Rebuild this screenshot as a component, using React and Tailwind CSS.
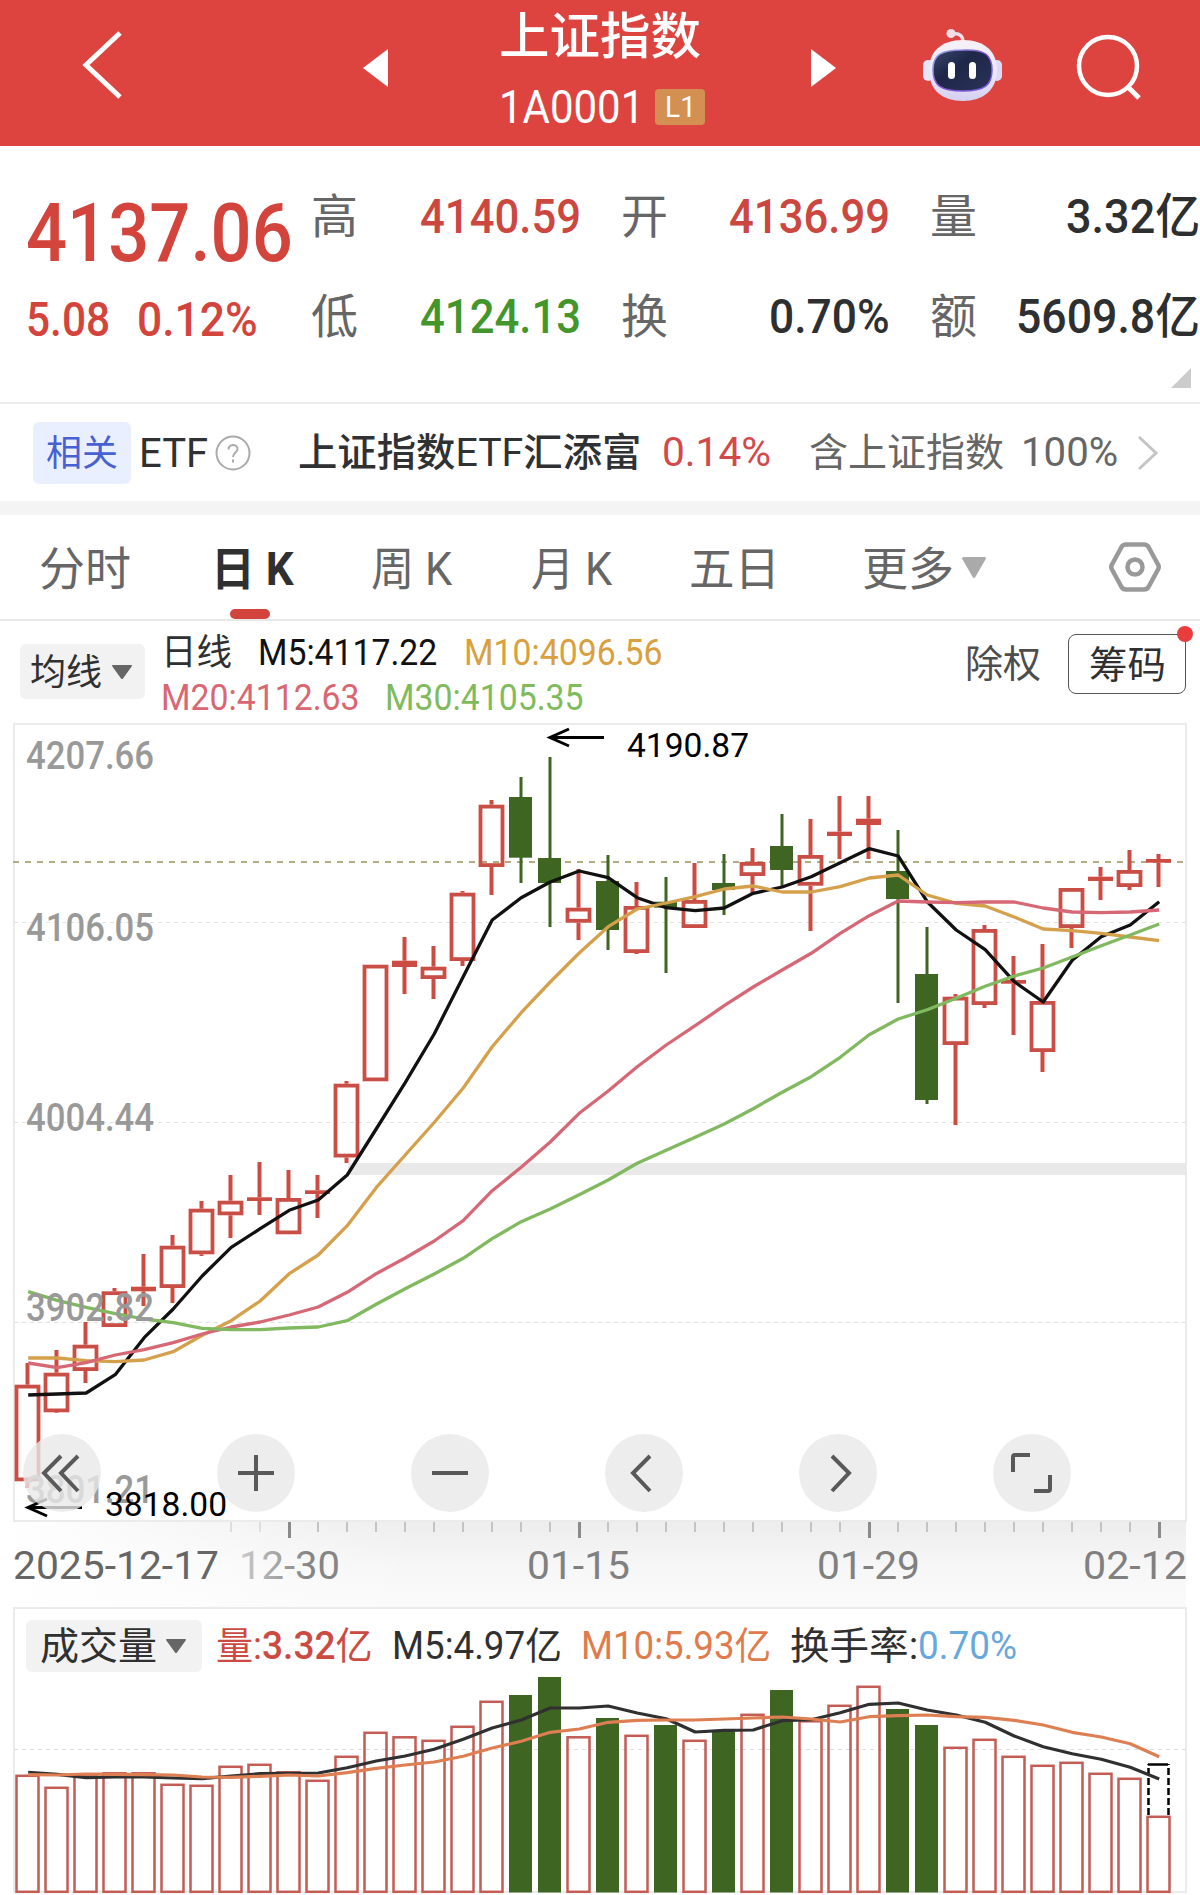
import React, { useLayoutEffect, useRef } from 'react'

const CJK = "font-['Roboto','Noto_Sans_CJK_SC',sans-serif]";

const candles = [
  // high, body top, body bottom, low, falling
  [1363, 1384.7, 1481.3, 1488], [1350, 1372.7, 1412.3, 1413], [1322, 1344.7, 1371, 1383], [1288, 1291.3, 1327, 1327],
  [1254, 1286.7, 1291.3, 1306], [1235, 1245.7, 1288, 1303], [1201, 1208.7, 1254.3, 1256], [1175, 1200.7, 1215.3, 1238],
  [1162, 1197.3, 1201, 1215], [1170, 1198, 1234.3, 1234.3], [1175, 1190.3, 1194, 1218], [1081, 1083.7, 1157.5, 1163],
  [964.7, 964.7, 1081.3, 1081.3], [937, 960.7, 967, 994], [946, 966.7, 979, 999], [891, 892.7, 961, 966],
  [800, 804.7, 867, 895], [777, 797, 857.7, 883, 1], [757, 858, 883, 927, 1], [869, 907.7, 922.7, 940],
  [855, 881, 930, 950, 1], [882, 906, 953, 954], [877, 901.7, 907.7, 973, 1], [863, 900, 928, 928],
  [854, 883, 890, 915, 1], [848, 862, 876, 893], [814, 846, 870, 887, 1], [819, 855, 885.7, 931],
  [796, 831.7, 836, 859], [796, 818.7, 825, 859], [830, 871, 899, 1003, 1], [927, 974, 1100, 1104, 1],
  [994, 996.7, 1045, 1125], [925, 929, 1005, 1008], [956, 980, 983.7, 1035], [944, 1001, 1052, 1072],
  [888, 888, 928, 948], [867, 876.7, 881, 900], [850, 870, 887, 890], [854, 859, 862.7, 887],
];

const ma5 = [1395, 1394, 1393, 1374.7, 1337.7, 1309, 1276, 1247.3, 1228.7, 1210.3, 1200, 1175, 1129, 1082.7, 1034, 976.7, 920, 897.7, 882, 871, 877.7, 897.7, 907.7, 910.7, 908, 893.3, 887, 876.7, 862.7, 848.7, 856, 901.7, 930, 949.7, 981.7, 1002, 960.3, 936.7, 925, 901.7];
const ma10 = [1358, 1358, 1360.7, 1361.7, 1360, 1351.7, 1335.3, 1320.7, 1301, 1273.7, 1255, 1225.7, 1187.7, 1155, 1122.5, 1088, 1046.7, 1012.7, 982, 953, 926.7, 909, 903, 896.7, 889, 886, 892, 892, 886.7, 878, 875, 895, 903.3, 906, 917, 929, 930.7, 933.3, 937, 940.7];
const ma20 = [1363, 1367.7, 1362.7, 1355, 1349.7, 1342.7, 1334, 1327, 1322, 1315, 1307, 1292.3, 1273.7, 1258, 1241, 1220.7, 1190.7, 1167.3, 1142, 1113.3, 1091, 1066.7, 1045, 1025.7, 1005.7, 987, 970, 953.3, 933.3, 915.7, 901, 902, 902.7, 902, 902, 908, 912, 912.7, 912, 910];
const ma30 = [1291.7, 1300.3, 1307.3, 1313.7, 1319, 1322.7, 1328.3, 1329.7, 1329.7, 1328, 1327, 1320.7, 1304.3, 1288.7, 1274, 1258.3, 1238.7, 1221.7, 1209, 1194.7, 1180, 1163.3, 1150.3, 1137.3, 1124, 1108.7, 1092.3, 1076.7, 1057.3, 1034.7, 1019, 1009.7, 998.3, 986.3, 976, 968, 957, 945.7, 935, 924];

const volumes = [1774.5, 1786.5, 1775, 1772, 1772, 1783.5, 1784.5, 1765.5, 1763.5, 1771, 1779.5, 1755.5, 1731.5, 1736, 1739.5, 1725.5, 1700.5, 1695, 1677, 1736, 1718, 1734.5, 1725, 1739.5, 1731, 1713.5, 1690, 1720, 1704.5, 1685.5, 1709, 1725, 1746.5, 1738.5, 1755.5, 1764.5, 1761.5, 1772.5, 1777.5, 1815.5];
const vol5 = [1772.3, 1774.3, 1777.7, 1777, 1777, 1778, 1778.7, 1776, 1773.7, 1773.3, 1773, 1767.7, 1761, 1756, 1749.3, 1739.3, 1728, 1720, 1708, 1708, 1706, 1713, 1718.7, 1732, 1730.3, 1730, 1720.7, 1719.7, 1712.7, 1704.3, 1703, 1710, 1715, 1722.3, 1736, 1746.7, 1753.7, 1759.3, 1767.3, 1779];
const vol10 = [1774.7, 1775, 1774, 1774.3, 1774.7, 1775, 1777, 1777.3, 1776.3, 1775, 1776, 1772.7, 1768.3, 1765, 1762, 1756.3, 1748, 1741.3, 1732.3, 1729, 1722.3, 1720.3, 1720, 1720, 1719, 1718, 1717, 1719, 1722, 1716.7, 1715.7, 1715, 1716.7, 1717.3, 1720.3, 1725, 1732.3, 1737, 1743.7, 1756.7];

const cx = (i) => 27.5 + i * 29;
const line = (ys) => ys.map((y, i) => `${cx(i) + 0.7},${y}`).join(' ');

// text squeezed or stretched to a given width
function Fit({ w, className = '', children }) {
  const ref = useRef(null);
  useLayoutEffect(() => {
    const el = ref.current;
    const fit = () => {
      el.style.transform = `scaleX(${w / el.offsetWidth})`;
    };
    fit();
    document.fonts.ready.then(fit);
  }, [w]);
  return (
    <span className="block shrink-0 whitespace-nowrap" style={{ width: w }}>
      <span ref={ref} className={`inline-block origin-left ${className}`}>{children}</span>
    </span>
  )
}

function Caret({ className = '' }) {
  return (
    <svg className={className} viewBox="0 0 20 14" fill="currentColor" preserveAspectRatio="none"><path d="M0 1Q0 0 1 0H19Q20 0 20 1L11 13.500Q10 14.500 9 13.500Z" /></svg>
  )
}

function Robot() {
  return (
    <svg className="w-20 h-[76px]" viewBox="0 0 80 76">
      <defs>
        <linearGradient id="shell" x1="0" y1="0" x2="0" y2="1">
          <stop offset="0" stopColor="#f8f1f7" />
          <stop offset=".6" stopColor="#e9e6fa" />
          <stop offset="1" stopColor="#d3cff0" />
        </linearGradient>
        <linearGradient id="face" x1="0" y1="0" x2="1" y2="1">
          <stop offset="0" stopColor="#3b476b" />
          <stop offset=".4" stopColor="#1e2748" />
          <stop offset="1" stopColor="#2b3459" />
        </linearGradient>
        <linearGradient id="rim" x1="0" y1="0" x2="1" y2="1">
          <stop offset="0" stopColor="#8fb8e8" />
          <stop offset=".5" stopColor="#8a4fd0" />
          <stop offset="1" stopColor="#6a62e0" />
        </linearGradient>
      </defs>
      <path d="M40 15C40 8 37 5 30 6" fill="none" stroke="#f0dfe8" strokeWidth="3.500" />
      <circle cx="28" cy="5.500" r="4.500" fill="#f3dde6" />
      <rect x="0" y="32" width="10" height="21" rx="5" fill="#e6e4f8" />
      <rect x="69" y="32" width="10" height="21" rx="5" fill="#dcdaf5" />
      <path d="M40 12C62 12 74 24 74 42C74 62 60 73 40 73C19 73 6 62 6 42C6 24 18 12 40 12Z" fill="url(#shell)" />
      <path d="M40 22C62 21 69 27 69 42C69 57 62 63 40 63C17 63 10 57 10 42C10 27 17 22 40 22Z" fill="url(#face)" stroke="url(#rim)" strokeWidth="1.500" />
      <rect x="25" y="34" width="7" height="17" rx="3.500" fill="#fff" />
      <rect x="46" y="34" width="7" height="17" rx="3.500" fill="#fff" />
    </svg>
  )
}

function Header() {
  return (
    <header className="flex h-[146px] bg-[#dd4440] text-white">
      <svg className="w-[42px] h-[72px] ml-[81px] mt-[29px]" viewBox="0 0 42 72" fill="none" stroke="currentColor" strokeWidth="5"><path d="M39 4L5 36L39 68" /></svg>
      <svg className="w-[26px] h-[38px] ml-[240px] mt-[49px]" viewBox="0 0 26 38" fill="currentColor"><path d="M25 0V38L0 19Z" /></svg>
      <div className="ml-[110px] w-[208px] pt-[7px]">
        <Fit w={202} className="text-[50px] leading-[60px] font-medium">上证指数</Fit>
        <div className="flex items-center h-[54px] mt-[13px]">
          <Fit w={145} className="text-[46px] leading-[54px]">1A0001</Fit>
          <span className="flex items-center justify-center ml-[11px] w-[50px] h-9 rounded-sm bg-[#d48f52] shrink-0">
            <Fit w={31} className="text-[29px] leading-9">L1</Fit>
          </span>
        </div>
      </div>
      <svg className="w-[26px] h-[38px] ml-[104px] mt-[49px]" viewBox="0 0 26 38" fill="currentColor"><path d="M0 0V38L25 19Z" /></svg>
      <div className="ml-[86px] mt-7"><Robot /></div>
      <svg className="w-[68px] h-[68px] ml-[72px] mt-[33px]" viewBox="0 0 68 68" fill="none" stroke="currentColor" strokeWidth="4.500"><circle cx="33" cy="33" r="29" /><path d="M53 54L64 65" strokeWidth="5" /></svg>
    </header>
  )
}

function Stat({ label, w, value, color, gap }) {
  return (
    <div className={`flex items-center h-[60px] ${gap}`}>
      <span className="text-[47px] leading-[60px] text-[#666]">{label}</span>
      <span className="ml-auto"><Fit w={w} className={`text-[48px] leading-[60px] font-medium ${color}`}>{value}</Fit></span>
    </div>
  )
}

function Quote() {
  return (
    <section className="relative flex h-[258px] pt-[41px] border-b-2 border-[#ebebeb]">
      <div className="ml-[26px] w-[285px] text-[#d3443c]">
        <div className="h-[88px]"><Fit w={267} className="text-[81px] leading-[93px] font-medium">4137.06</Fit></div>
        <div className="flex gap-[27px] mt-[15px]">
          <Fit w={84} className="text-[48px] leading-[60px] font-medium">5.08</Fit>
          <Fit w={121} className="text-[48px] leading-[60px] font-medium">0.12%</Fit>
        </div>
      </div>
      <div className="w-[270px]">
        <Stat label="高" w={161} value="4140.59" color="text-[#cc4740]" />
        <Stat label="低" w={161} value="4124.13" color="text-[#43962b]" gap="mt-10" />
      </div>
      <div className="w-[269px] ml-[40px]">
        <Stat label="开" w={161} value="4136.99" color="text-[#cc4740]" />
        <Stat label="换" w={121} value="0.70%" color="text-[#2e2f30]" gap="mt-10" />
      </div>
      <div className="w-[270px] ml-[40px]">
        <Stat label="量" w={134} value="3.32亿" color="text-[#2e2f30]" />
        <Stat label="额" w={184} value="5609.8亿" color="text-[#2e2f30]" gap="mt-10" />
      </div>
      <svg className="absolute right-[9px] bottom-[14px] w-5 h-5" viewBox="0 0 20 20" fill="#ccc"><path d="M20 0V20H0Z" /></svg>
    </section>
  )
}

function Related() {
  return (
    <section className="flex items-center h-[97px] text-[#303133]">
      <span className="flex items-center justify-center ml-[33px] w-[98px] h-[62px] pt-0.5 rounded-md bg-[#e9effe] text-[#4762d0] text-[36px] shrink-0">相关</span>
      <span className="ml-2 pt-0.5"><Fit w={69} className="text-[40px]">ETF</Fit></span>
      <svg className="w-9 h-9 ml-[7px] shrink-0" viewBox="0 0 36 36" fill="none" stroke="#aaa" strokeWidth="2"><circle cx="18" cy="18" r="16.500" /><path d="M13.500 14.500C13.500 8.500 22.500 8.500 22.500 14C22.500 17.500 18 17.500 18 22" /><path d="M18 24.500V27.500" /></svg>
      <span className="ml-[47px] pt-0.5"><Fit w={343} className="text-[39px] font-medium">上证指数<span className="font-normal">ETF</span>汇添富</Fit></span>
      <span className="ml-[21px]"><Fit w={109} className="text-[41px] text-[#d3494a]">0.14%</Fit></span>
      <span className="ml-[38px] pt-0.5"><Fit w={195} className="text-[39px] text-[#666]">含上证指数</Fit></span>
      <span className="ml-[17px]"><Fit w={97} className="text-[41px] text-[#666]">100%</Fit></span>
      <svg className="w-[22px] h-9 ml-[19px]" viewBox="0 0 22 36" fill="none" stroke="#c4c4c4" strokeWidth="3"><path d="M2 2L19 18L2 34" /></svg>
    </section>
  )
}

function Tabs() {
  return (
    <nav className="flex h-[106px] pt-[22px] border-b-2 border-[#e8e8e8] text-[46px] leading-[64px] text-[#666]">
      <span className="ml-[39px]"><Fit w={92}>分时</Fit></span>
      <span className="ml-[80px] text-[#303030]">
        <Fit w={83} className="font-bold">日 K</Fit>
        <i className="block w-10 h-[10px] ml-[19px] mt-2 rounded-full bg-[#d3443c]" />
      </span>
      <span className="ml-[77px]"><Fit w={81}>周 K</Fit></span>
      <span className="ml-[79px]"><Fit w={81}>月 K</Fit></span>
      <span className="ml-[77px]"><Fit w={91}>五日</Fit></span>
      <span className="ml-[82px]"><Fit w={92}>更多</Fit></span>
      <Caret className="w-[24px] h-[21px] ml-[8px] mt-[20px] text-[#aaa]" />
      <svg className="w-[54px] h-[54px] ml-[122px] mt-[3px]" viewBox="0 0 54 54" fill="none" stroke="#999" strokeWidth="4.500" strokeLinejoin="round"><path d="M18 4.500H36Q39 4.500 40.500 7L50 24.500Q51.500 27 50 29.500L40.500 47Q39 49.500 36 49.500H18Q15 49.500 13.500 47L4 29.500Q2.500 27 4 24.500L13.500 7Q15 4.500 18 4.500Z" /><circle cx="27" cy="27" r="7.500" /></svg>
    </nav>
  )
}

function Averages() {
  return (
    <section className="flex h-[101px] text-[36px] leading-[44px]">
      <button className="flex items-center mt-[23px] ml-5 w-[125px] h-[55px] pl-[10px] rounded-md bg-[#f2f2f2] text-[#303030]">
        <span className="pt-0.5"><Fit w={72}>均线</Fit></span>
        <Caret className="w-5 h-[14px] ml-[10px] text-[#666]" />
      </button>
      <div className="ml-4 mt-[10px] w-[506px]">
        <div className="flex">
          <Fit w={71} className="text-[#303030]">日线</Fit>
          <span className="ml-[26px]"><Fit w={179} className="text-[#111]">M5:4117.22</Fit></span>
          <span className="ml-[27px]"><Fit w={199} className="text-[#d9a041]">M10:4096.56</Fit></span>
        </div>
        <div className="flex gap-[25px] mt-[1px]">
          <Fit w={199} className="text-[#d96773]">M20:4112.63</Fit>
          <Fit w={199} className="text-[#7fbb5c]">M30:4105.35</Fit>
        </div>
      </div>
      <div className="ml-[298px] mt-[21px]"><Fit w={76} className="text-[38px] text-[#4d4d4d]">除权</Fit></div>
      <button className="relative flex items-center justify-center ml-[27px] mt-[13px] w-[118px] h-[60px] pt-0.5 border-[1.5px] border-[#555] rounded-lg">
        <Fit w={77} className="text-[38px] text-[#303030]">筹码</Fit>
        <i className="absolute -top-[9px] -right-[8px] size-4 rounded-full bg-[#e93c3d]" />
      </button>
    </section>
  )
}

function SvgText({ x, y, w, size = 38, fill = '#999', weight = 500, children }) {
  return <text x={x} y={y} fontSize={size} fill={fill} fontWeight={weight} textLength={w} lengthAdjust="spacingAndGlyphs">{children}</text>
}

function Candle({ i, data }) {
  const [high, top, bottom, low, falling] = data;
  const x = cx(i);
  if (falling) {
    return (
      <g fill="#3f6522">
        <rect x={x - 1} y={high} width="3" height={low - high} />
        <rect x={x - 11.500} y={top} width="23" height={bottom - top} />
      </g>
    )
  }
  const flat = bottom - top < 8;
  return (
    <g fill="#cc4b42">
      <rect x={x - 2} y={high} width="4" height={Math.max(top - high, 0)} />
      <rect x={x - 2} y={bottom} width="4" height={Math.max(low - bottom, 0)} />
      {flat
        ? <rect x={x - 12.500} y={top} width="25" height={bottom - top} />
        : <rect x={x - 11} y={top + 1.900} width="22" height={bottom - top - 3.800} fill="none" stroke="#c94e46" strokeWidth="3.800" />}
    </g>
  )
}

function RoundButton({ children }) {
  return (
    <button className="flex items-center justify-center size-[78px] rounded-full bg-[#e8e8e8]/80">
      <svg className="size-[78px]" viewBox="-39 -39 78 78" fill="none" stroke="#595959" strokeWidth="4">{children}</svg>
    </button>
  )
}

function PriceChart() {
  return (
    <section className="relative h-[885px]">
      <svg className="block w-[1200px] h-[885px]" viewBox="0 722 1200 885">
        <defs>
          <linearGradient id="axisBg" x1="0" y1="0" x2="0" y2="1">
            <stop offset="0" stopColor="#ededed" />
            <stop offset=".55" stopColor="#f7f7f7" />
            <stop offset="1" stopColor="#fafafa" />
          </linearGradient>
          <linearGradient id="axisFade" x1="0" y1="0" x2="1" y2="0">
            <stop offset="0" stopColor="#fff" />
            <stop offset="1" stopColor="#fff" stopOpacity="0" />
          </linearGradient>
          <linearGradient id="dateFade" gradientUnits="userSpaceOnUse" x1="235" y1="0" x2="340" y2="0">
            <stop offset="0" stopColor="#d0d0d0" />
            <stop offset=".7" stopColor="#858585" />
          </linearGradient>
        </defs>
        <rect x="0" y="1521" width="1186" height="86" fill="url(#axisBg)" />
        <rect x="0" y="1521" width="420" height="86" fill="url(#axisFade)" />
        <rect x="14" y="724" width="1172" height="797" fill="#fff" stroke="#ebebeb" strokeWidth="2" />
        {[922.5, 1122.5, 1322.3].map((y) => <path key={y} d={`M14 ${y}H1186`} stroke="#e2e2e2" strokeWidth="1.200" strokeDasharray="4 4" />)}
        <path d="M13 862H1184" stroke="#b2ad80" strokeWidth="2" strokeDasharray="6 6" />
        <rect x="348" y="1163" width="838" height="12" fill="#e9e9e9" />
        {candles.map((c, i) => <Candle key={i} i={i} data={c} />)}
        <g fill="none" strokeWidth="3.300" strokeLinejoin="round">
          <polyline points={line(ma5)} stroke="#111" />
          <polyline points={line(ma10)} stroke="#d5a04b" />
          <polyline points={line(ma20)} stroke="#d66876" />
          <polyline points={line(ma30)} stroke="#80b95f" />
        </g>
        <SvgText x="26" y="769" w="128">4207.66</SvgText>
        <SvgText x="26" y="941" w="128">4106.05</SvgText>
        <SvgText x="26" y="1131" w="128">4004.44</SvgText>
        <SvgText x="26" y="1321" w="128">3902.82</SvgText>
        <SvgText x="26" y="1503" w="128">3801.21</SvgText>
        <g fill="none" stroke="#000" strokeWidth="3">
          <path d="M604 737.500H550M569 729L550 737.500L569 746" />
          <path d="M82 1507.500H28M47 1499L28 1507.500L47 1516" />
        </g>
        <SvgText x="627" y="757" w="122" size="34" fill="#000" weight="400">4190.87</SvgText>
        <SvgText x="105" y="1516" w="122" size="34" fill="#000" weight="400">3818.00</SvgText>
        {candles.map((c, i) => {
          if (i < 7) return null;
          const major = (i + 1) % 10 === 0;
          return <rect key={i} x={cx(i) + (major ? -0.5 : -0.5)} y="1522" width={major ? 3 : 2} height={major ? 16 : 10} fill={major ? '#8a8a8a' : i < 9 ? '#dedede' : '#c4c4c4'} />
        })}
        <SvgText x="13" y="1579" w="206" fill="#666" weight="400">2025-12-17</SvgText>
        <SvgText x="239" y="1579" w="101" fill="url(#dateFade)" weight="400">12-30</SvgText>
        <SvgText x="527" y="1579" w="103" fill="#808080" weight="400">01-15</SvgText>
        <SvgText x="817" y="1579" w="103" fill="#808080" weight="400">01-29</SvgText>
        <SvgText x="1083" y="1579" w="104" fill="#808080" weight="400">02-12</SvgText>
      </svg>
      <div className="absolute left-[23px] top-[712px] flex gap-[116px]">
        <RoundButton><path d="M-1 -17L-18 0L-1 18M16 -17L-1 0L16 18" /></RoundButton>
        <RoundButton><path d="M-18 0H18M0 -18V18" /></RoundButton>
        <RoundButton><path d="M-18 0H18" /></RoundButton>
        <RoundButton><path d="M6 -17L-11 0L6 18" /></RoundButton>
        <RoundButton><path d="M-6 -17L11 0L-6 18" /></RoundButton>
        <RoundButton><path d="M-19 -1V-16Q-19 -18 -17 -18H-2M18 2V16Q18 18 16 18H2" /></RoundButton>
      </div>
    </section>
  )
}

function VolumeChart() {
  return (
    <section className="relative h-[288px]">
      <svg className="block w-[1200px] h-[288px]" viewBox="0 1607 1200 288">
        <rect x="14" y="1608" width="1172" height="284" fill="none" stroke="#ebebeb" strokeWidth="2" />
        <path d="M14 1749.500H1186" stroke="#dedede" strokeWidth="1.200" strokeDasharray="4 4" />
        {volumes.map((y, i) => candles[i][4]
          ? <rect key={i} x={cx(i) - 11.500} y={y} width="23" height={1892.5 - y} fill="#3f6522" />
          : <rect key={i} x={cx(i) - 11} y={y + 1.300} width="22" height={1892 - y - 1.500} fill="none" stroke="#c25c54" strokeWidth="2.500" />)}
        <path d="M1148.500 1815V1764M1168.500 1815V1764" stroke="#000" strokeWidth="2.500" strokeDasharray="7 3" />
        <path d="M1148 1764.500H1168" stroke="#000" strokeWidth="2.500" />
        <g fill="none" strokeWidth="3.200" strokeLinejoin="round">
          <polyline points={line(vol5)} stroke="#303030" />
          <polyline points={line(vol10)} stroke="#dd7f52" />
        </g>
      </svg>
      <div className="absolute left-[26px] top-[13px] flex items-center h-[52px] text-[38px] leading-[52px] text-[#303030]">
        <button className="flex items-center w-44 h-[52px] pl-[13px] rounded-md bg-[#f2f2f2]">
          <Fit w={117}>成交量</Fit>
          <Caret className="w-5 h-[14px] ml-[10px] text-[#666]" />
        </button>
        <span className="ml-[14px]"><Fit w={157} className="text-[#cb4b43]">量:<span className="font-medium">3.32</span>亿</Fit></span>
        <span className="ml-[19px]"><Fit w={170}>M5:4.97亿</Fit></span>
        <span className="ml-[19px]"><Fit w={190} className="text-[#e07b4d]">M10:5.93亿</Fit></span>
        <span className="ml-[19px]"><Fit w={128}>换手率:</Fit></span>
        <Fit w={99} className="text-[#66a7dc]">0.70%</Fit>
      </div>
    </section>
  )
}

export default function App() {
  return (
    <div className={`w-[1200px] h-[1895px] overflow-hidden bg-white ${CJK}`}>
      <Header />
      <Quote />
      <Related />
      <div className="h-[14px] bg-[#f4f4f4]" />
      <Tabs />
      <Averages />
      <PriceChart />
      <VolumeChart />
    </div>
  )
}
